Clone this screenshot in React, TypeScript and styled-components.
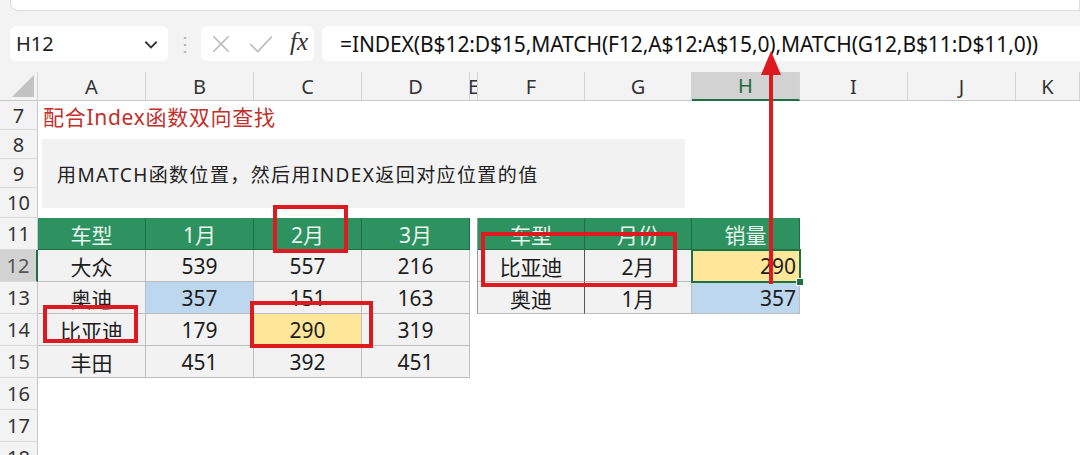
import styled, {createGlobalStyle} from "styled-components";

const GlobalStyle = createGlobalStyle`
  body {
    margin: 0;
    background: #ffffff;
    font-family: "Noto Sans", "Noto Sans CJK SC", sans-serif;
  }
`;

const Shell = styled.div`
  position: relative;
  width: 1080px;
  height: 455px;
  overflow: hidden;
  background: #ffffff;
`;

const TopBar = styled.div`
  height: 72px;
  background: #f3f3f3;
  display: flex;
  flex-direction: column;
`;

const RibbonEdge = styled.div`
  height: 10px;
  margin-left: 10px;
  background: #ffffff;
  border: 1px solid #dcdcdc;
  border-top: none;
  border-radius: 0 0 0 8px;
`;

const FormulaRow = styled.div`
  display: flex;
  align-items: center;
  height: 35px;
  margin-top: 15px;
  padding-left: 10px;
`;

const Box = styled.div`
  height: 35px;
  background: #ffffff;
  border-radius: 6px;
  display: flex;
  align-items: center;
  box-sizing: border-box;
`;

const NameBox = styled(Box)`
  width: 158px;
  padding: 0 8px 0 6px;
  justify-content: space-between;
  font-size: 20px;
  color: #222;
`;

const Dots = styled.div`
  width: 33px;
  text-align: center;
  color: #b0b0b0;
  font-size: 20px;
  line-height: 1;
`;

const FxBox = styled(Box)`
  width: 113px;
  padding: 0 6px 0 9px;
  justify-content: space-between;
`;

const FxText = styled.span`
  font-family: "Liberation Serif", "DejaVu Serif", serif;
  font-style: italic;
  font-size: 25px;
  color: #333;
  margin-top: -4px;
`;

const FormulaBox = styled(Box)`
  flex: 1;
  margin-left: 8px;
  border-radius: 6px 0 0 6px;
  padding-left: 18px;
  font-size: 21px;
  color: #111;
  letter-spacing: -0.1px;
  white-space: nowrap;
`;

const Sheet = styled.div`
  position: relative;
  display: grid;
  grid-template-columns: 38px 108px 108px 108px 108px 8px 107px 107px 108px 108px 108px 1fr;
  grid-template-rows: 29px 29px 29px 29px 30px repeat(8, 32px);
`;

const Corner = styled.div`
  grid-column: 1;
  grid-row: 1;
  background: #f3f3f3;
  border-right: 1px solid #d4d4d4;
  border-bottom: 1px solid #c8c8c8;
  position: relative;
  &::after {
    content: "";
    position: absolute;
    right: 3px;
    bottom: 3px;
    border-left: 22px solid transparent;
    border-bottom: 22px solid #c2c2c2;
  }
`;

const ColHead = styled.div<{ $col: number; $active?: boolean }>`
  grid-column: ${p => p.$col};
  grid-row: 1;
  display: flex;
  align-items: center;
  justify-content: center;
  font-size: 20px;
  color: ${p => (p.$active ? "#1e6b43" : "#333")};
  background: ${p => (p.$active ? "#d2d2d2" : "#f3f3f3")};
  border-right: 1px solid #d4d4d4;
  border-bottom: ${p => (p.$active ? "2px solid #1e7145" : "1px solid #c8c8c8")};
  box-sizing: border-box;
  overflow: hidden;
`;

const RowHead = styled.div<{ $row: number; $active?: boolean }>`
  grid-column: 1;
  grid-row: ${p => p.$row};
  display: flex;
  align-items: center;
  justify-content: center;
  font-size: 20px;
  color: ${p => (p.$active ? "#555" : "#333")};
  background: ${p => (p.$active ? "#d2d2d2" : "#f3f3f3")};
  border-bottom: 1px solid #dadada;
  border-right: ${p => (p.$active ? "2px solid #1e7145" : "1px solid #c8c8c8")};
  box-sizing: border-box;
`;

const Title = styled.div`
  grid-column: 2 / 6;
  grid-row: 2;
  display: flex;
  align-items: center;
  padding-left: 5px;
  font-size: 21px;
  letter-spacing: 0.7px;
  color: #c0312c;
`;

const NoteBox = styled.div`
  grid-column: 2 / 9;
  grid-row: 3 / 6;
  margin: 9px 7px 10px 4px;
  background: #f2f2f2;
  display: flex;
  align-items: center;
  padding-left: 15px;
  font-size: 19px;
  letter-spacing: 1.4px;
  color: #222;
`;

type Fill = "head" | "body" | "blue" | "yellow";

const fills: Record<Fill, string> = {
  head: "#2e9160",
  body: "#f2f2f2",
  blue: "#bdd7ee",
  yellow: "#ffe699",
};

const Cell = styled.div<{ $col: number; $row: number; $fill: Fill; $right?: boolean; $edge?: string }>`
  grid-column: ${p => p.$col};
  grid-row: ${p => p.$row};
  position: relative;
  display: flex;
  align-items: center;
  justify-content: ${p => (p.$right ? "flex-end" : "center")};
  padding-right: ${p => (p.$right ? "3px" : "0")};
  box-sizing: border-box;
  font-size: 21px;
  background: ${p => fills[p.$fill]};
  color: ${p => (p.$fill === "head" ? "#e9f6ee" : "#1d1d1d")};
  border-right: 1px solid ${p => p.$edge ?? (p.$fill === "head" ? "#1f6d45" : "#bdbdbd")};
  border-bottom: 1px solid ${p => (p.$fill === "head" ? "#1f6d45" : "#bdbdbd")};
`;

const LeftEdge = styled.div<{ $col: number; $rows: string }>`
  grid-column: ${p => p.$col};
  grid-row: ${p => p.$rows};
  border-right: 1px solid #9a9a9a;
`;

const Selected = styled.div`
  grid-column: 9;
  grid-row: 7;
  position: relative;
  z-index: 2;
  border: 2px solid #1e7145;
  margin: -1px;
  &::after {
    content: "";
    position: absolute;
    right: -5px;
    bottom: -5px;
    width: 6px;
    height: 6px;
    background: #1e7145;
    border: 1px solid #ffffff;
  }
`;

const RedBox = styled.div<{ $x: number; $y: number; $w: number; $h: number }>`
  position: absolute;
  left: ${p => p.$x}px;
  top: ${p => p.$y}px;
  width: ${p => p.$w}px;
  height: ${p => p.$h}px;
  border: 4.5px solid #dc1a1f;
  box-sizing: border-box;
  z-index: 3;
`;

const Arrow = styled.svg`
  position: absolute;
  left: 759px;
  top: 50px;
  z-index: 4;
`;

const Chevron = () => (
  <svg width="18" height="18" viewBox="0 0 16 16">
    <path d="M3 6 L8 11 L13 6" fill="none" stroke="#333" strokeWidth="1.6"/>
  </svg>
);

const XIcon = () => (
  <svg width="22" height="22" viewBox="0 0 20 20">
    <path d="M3 3 L17 17 M17 3 L3 17" stroke="#b8b8b8" strokeWidth="1.4"/>
  </svg>
);

const CheckIcon = () => (
  <svg width="26" height="22" viewBox="0 0 24 20">
    <path d="M2 10 L9 17 L22 3" fill="none" stroke="#b8b8b8" strokeWidth="1.4"/>
  </svg>
);

const columns = ["A", "B", "C", "D", "E", "F", "G", "H", "I", "J", "K"];
const rowNums = [7, 8, 9, 10, 11, 12, 13, 14, 15, 16, 17, 18];

const table1: [string, string, string, string][] = [
  ["大众", "539", "557", "216"],
  ["奥迪", "357", "151", "163"],
  ["比亚迪", "179", "290", "319"],
  ["丰田", "451", "392", "451"],
];

function App() {
  return (
    <Shell>
      <GlobalStyle/>
      <TopBar>
        <RibbonEdge/>
        <FormulaRow>
          <NameBox>
            <span>H12</span>
            <Chevron/>
          </NameBox>
          <Dots>⋮</Dots>
          <FxBox>
            <XIcon/>
            <CheckIcon/>
            <FxText>fx</FxText>
          </FxBox>
          <FormulaBox>=INDEX(B$12:D$15,MATCH(F12,A$12:A$15,0),MATCH(G12,B$11:D$11,0))</FormulaBox>
        </FormulaRow>
      </TopBar>

      <Sheet>
        <Corner/>
        {columns.map((c, i) => (
          <ColHead key={c} $col={i + 2} $active={c === "H"}>{c}</ColHead>
        ))}
        {rowNums.map(r => (
          <RowHead key={r} $row={r - 5} $active={r === 12}>{r}</RowHead>
        ))}

        <Title>配合Index函数双向查找</Title>
        <NoteBox>用MATCH函数位置，然后用INDEX返回对应位置的值</NoteBox>

        {["车型", "1月", "2月", "3月"].map((t, i) => (
          <Cell key={t} $col={i + 2} $row={6} $fill="head">{t}</Cell>
        ))}
        {table1.map((row, r) =>
          row.map((v, c) => {
            let fill: Fill = "body";
            if (r === 1 && c === 1) fill = "blue";
            if (r === 2 && c === 2) fill = "yellow";
            return <Cell key={`${r}-${c}`} $col={c + 2} $row={r + 7} $fill={fill}>{v}</Cell>;
          })
        )}

        <LeftEdge $col={6} $rows="6 / 9"/>
        {["车型", "月份", "销量"].map((t, i) => (
          <Cell key={t} $col={i + 7} $row={6} $fill="head">{t}</Cell>
        ))}
        <Cell $col={7} $row={7} $fill="body" $edge="#555">比亚迪</Cell>
        <Cell $col={8} $row={7} $fill="body">2月</Cell>
        <Cell $col={9} $row={7} $fill="yellow" $right>290</Cell>
        <Cell $col={7} $row={8} $fill="body" $edge="#555">奥迪</Cell>
        <Cell $col={8} $row={8} $fill="body">1月</Cell>
        <Cell $col={9} $row={8} $fill="blue" $right>357</Cell>
        <Selected/>

        <RedBox $x={273} $y={133} $w={75} $h={48}/>
        <RedBox $x={43} $y={233} $w={95} $h={38}/>
        <RedBox $x={250} $y={229} $w={123} $h={47}/>
        <RedBox $x={481} $y={160} $w={196} $h={55}/>
      </Sheet>

      <Arrow width="24" height="236" viewBox="0 0 24 236">
        <line x1="12" y1="20" x2="12" y2="234" stroke="#dc1a1f" strokeWidth="4"/>
        <polygon points="2,25 12,1 22,25" fill="#dc1a1f"/>
      </Arrow>
    </Shell>
  );
}

export default App;
